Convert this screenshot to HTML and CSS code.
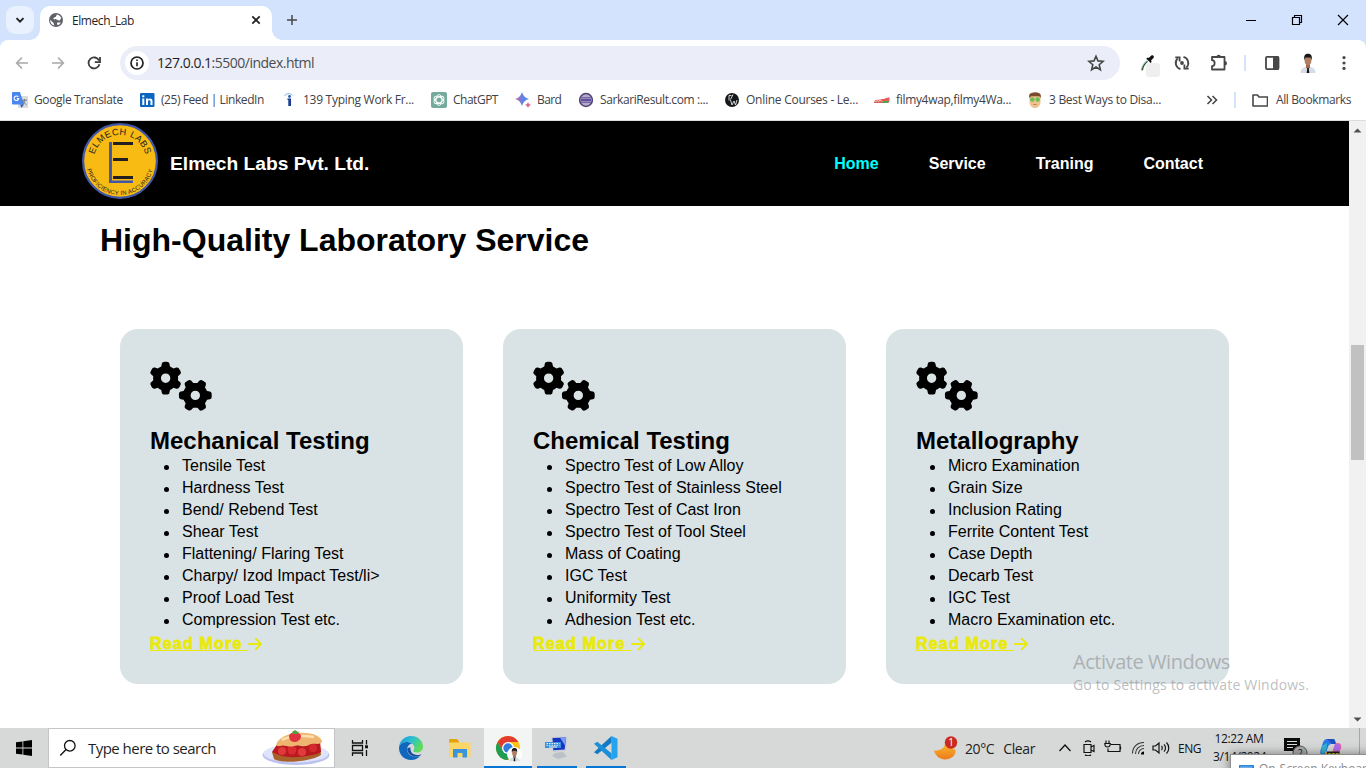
FILE: index.html
```html
<!DOCTYPE html>
<html lang="en">
<head>
<meta charset="utf-8">
<title>Elmech_Lab</title>
<link rel="stylesheet" href="styles.css">
</head>
<body>
<svg class="defs" aria-hidden="true">
  <defs>
    <path id="gear" d="M308.5 135.3c7.1-6.3 9.9-16.2 6.2-25c-2.3-5.3-4.8-10.5-7.6-15.5L304 89.4c-3-5-6.3-9.9-9.8-14.6c-5.7-7.6-15.7-10.1-24.7-7.1l-28.2 9.3c-10.7-8.8-23-16-36.2-20.9L199 27.1c-1.9-9.3-9.1-16.7-18.5-17.8C173.9 8.4 167.2 8 160.4 8h-.7c-6.8 0-13.5 .4-20.1 1.2c-9.4 1.1-16.6 8.6-18.5 17.8L115 56.1c-13.3 5-25.5 12.1-36.2 20.9L50.5 67.8c-9-3-19-.5-24.7 7.1c-3.5 4.7-6.8 9.6-9.9 14.6l-3 5.3c-2.8 5-5.3 10.2-7.6 15.6c-3.7 8.7-.9 18.6 6.2 25l22.2 19.8C32.6 161.9 32 168.9 32 176s.6 14.1 1.7 20.9L11.5 216.7c-7.1 6.3-9.9 16.2-6.2 25c2.3 5.3 4.8 10.5 7.6 15.6l3 5.2c3 5.1 6.3 9.9 9.9 14.6c5.7 7.6 15.7 10.1 24.7 7.1l28.2-9.3c10.7 8.8 23 16 36.2 20.9l6.1 29.1c1.9 9.3 9.1 16.7 18.5 17.8c6.7 .8 13.5 1.2 20.4 1.2s13.7-.4 20.4-1.2c9.4-1.1 16.6-8.6 18.5-17.8l6.1-29.1c13.3-5 25.5-12.1 36.2-20.9l28.2 9.3c9 3 19 .5 24.7-7.1c3.5-4.7 6.8-9.5 9.8-14.6l3.1-5.4c2.8-5 5.3-10.2 7.6-15.5c3.7-8.7 .9-18.6-6.2-25l-22.2-19.8c1.1-6.8 1.7-13.8 1.7-20.9s-.6-14.1-1.7-20.9l22.2-19.8zM112 176a48 48 0 1 1 96 0a48 48 0 1 1 -96 0z"/>
    <symbol id="cogs" viewBox="0 0 640 512">
      <use href="#gear"/>
      <use href="#gear" transform="translate(464 352) rotate(90) translate(-160 -176)"/>
    </symbol>
    <symbol id="arrow" viewBox="0 0 14 14"><path d="M1 7h12M7.700 1.700 13 7l-5.300 5.300" fill="none" stroke="#e9e90b" stroke-width="1.900" stroke-linecap="round" stroke-linejoin="round"/></symbol>
    <symbol id="person" viewBox="0 0 20 20">
      <path d="M2.500 20c0-4 2.500-5.500 5.500-6h4c3 .5 5.500 2 5.500 6z" fill="#d5dde6"/>
      <path d="M8 11h4v3.500l-2 2-2-2z" fill="#a06a50"/><path d="M9.300 15h1.400l.6 5H8.700z" fill="#15161c"/>
      <ellipse cx="10" cy="7.500" rx="3.400" ry="5" fill="#b07e62"/>
      <path d="M6.300 7.500C5.500 2 7.500.8 10 .8s4.500 1.200 3.700 6.700c-.5-1.500-.8-2.500-1.400-2.900H7.700c-.6.400-.9 1.400-1.400 2.900z" fill="#17161a"/>
    </symbol>
  </defs>
</svg>

<header class="tabstrip">
  <button class="tab-search"><svg width="12" height="12" viewBox="0 0 12 12"><path d="M2.500 4.200 6 7.700l3.500-3.500" fill="none" stroke="#1f1f1f" stroke-width="1.900"/></svg></button>
  <div class="tab">
    <svg width="14" height="14" viewBox="0 0 14 14"><circle cx="7" cy="7" r="7" fill="#5f6368"/><path d="M1.200 6.800 4.500 10c.6.6.3 1.600.8 2.600C2.500 12 1 9.500 1.200 6.800zM8 1.400c2 .3 3.500 1.800 4.200 3.700L11 7c-.5 1-2 .3-2.800-.3-.9-.6-2.700 0-3.700-.8-.5-.9 1-1.600 2-1.900.8-.3.600-1.700 1.500-2.600zM8.500 9.500h3.200c-.6 1.300-1.600 2.200-2.900 2.700-.8-.8-1-2-.3-2.700z" fill="#fff"/></svg>
    <span class="tab-title">Elmech_Lab</span>
    <svg class="tab-close" width="10" height="10" viewBox="0 0 10 10"><path d="m1.300 1.300 7.400 7.400m0-7.400L1.300 8.700" stroke="#1f1f1f" stroke-width="1.700"/></svg>
  </div>
  <svg class="new-tab" width="12" height="12" viewBox="0 0 12 12"><path d="M6 1v10M1 6h10" stroke="#474747" stroke-width="1.500"/></svg>
  <div class="window-controls">
    <svg width="12" height="12" viewBox="0 0 12 12"><path d="M1 6.500h10" stroke="#000"/></svg>
    <svg width="12" height="12" viewBox="0 0 12 12"><path d="M1.500 3.500h7v7h-7zM3.500 3V1.500h7v7H9" fill="none" stroke="#000" stroke-width="1.200"/></svg>
    <svg width="12" height="12" viewBox="0 0 12 12"><path d="m1 1 10 10M11 1 1 11" stroke="#000" stroke-width="1.200"/></svg>
  </div>
</header>

<div class="toolbar-wrap"><div class="toolbar">
  <svg class="ic" viewBox="0 0 20 20"><path d="M16 10H5M10 4.500 4.700 10 10 15.500" fill="none" stroke="#a9a9a9" stroke-width="1.700"/></svg>
  <svg class="ic" viewBox="0 0 20 20"><path d="M4 10h11M10 4.500 15.300 10 10 15.500" fill="none" stroke="#a9a9a9" stroke-width="1.700"/></svg>
  <svg class="ic" viewBox="0 0 20 20"><path d="M15 7.500A5.500 5.500 0 1 0 15.400 11.200" fill="none" stroke="#3c3c3c" stroke-width="1.800"/><path d="M16 4v5.200h-5.200" fill="none" stroke="#3c3c3c" stroke-width="1.800"/></svg>
  <div class="omnibox">
    <span class="site-info"><svg width="14" height="14" viewBox="0 0 14 14"><circle cx="7" cy="7" r="6" fill="none" stroke="#1f1f1f" stroke-width="1.700"/><path d="M7 6.300v4M7 3.500v1.600" stroke="#1f1f1f" stroke-width="1.600"/></svg></span>
    <span class="url"><b>127.0.0.1</b>:5500/index.html</span>
    <svg class="star" width="18" height="18" viewBox="0 0 18 18"><path d="m9 2.200 2 4.700 5.100.4-3.900 3.400 1.200 5L9 13l-4.400 2.700 1.200-5L1.900 7.300 7 6.900z" fill="none" stroke="#474747" stroke-width="1.600"/></svg>
  </div>
  <svg class="ic" viewBox="0 0 20 20"><rect x="8" y="10" width="14" height="14" rx="3" fill="#efefef"/><path d="M4 17.500c0-3 2-6.500 5.500-9.500" fill="none" stroke="#8fb39b" stroke-width="2.200"/><path d="M4.300 17c.8-3.500 2.500-6.500 5-8.500" stroke="#24452f" stroke-width="1" fill="none"/><path d="m8.300 5.800 4.400 4.200 1-1.200-.7-1.200 2-2c1.300-1.400 1-2.300.3-2.900-.8-.7-2-.5-3 .7L10.700 5l-1.300-.4z" fill="#111"/></svg>
  <svg class="ic" viewBox="0 0 20 20"><g fill="none" stroke="#474747" stroke-width="1.800"><path d="M11.500 3.900A6.300 6.300 0 0 1 14.300 14.600M8.500 16.100A6.300 6.300 0 0 1 5.700 5.400"/><path d="M3.300 4.300h4.300v4.300M16.700 15.700h-4.300v-4.300"/></g><circle cx="10" cy="10" r="1.900" fill="#474747"/></svg>
  <svg class="ic shift" viewBox="0 0 20 20"><path d="M3 4h12.500v12.500H3v-3.300c3.500-.3 3.500-5.700 0-6z" fill="none" stroke="#474747" stroke-width="1.800" stroke-linejoin="round"/><path d="M7.500 4a2.200 2.200 0 0 1 4.400 0zM15.800 8a2.200 2.200 0 0 1 0 4.400z" fill="#474747"/></svg>
  <i class="sep shift"></i>
  <svg class="ic shift" viewBox="0 0 20 20"><rect x="4" y="3.900" width="12.500" height="12.200" rx="1" fill="none" stroke="#474747" stroke-width="1.800"/><path d="M11 3.500h6v13h-6z" fill="#474747"/></svg>
  <svg class="ic"><use href="#person"/></svg>
  <svg class="ic" viewBox="0 0 20 20"><g fill="#474747"><circle cx="10" cy="4.600" r="1.600"/><circle cx="10" cy="10" r="1.600"/><circle cx="10" cy="15.400" r="1.600"/></g></svg>
</div></div>

<div class="bookmarks">
  <a><svg viewBox="0 0 16 16"><rect x="6" y="4" width="10" height="12" rx="1" fill="#d8dade"/><path d="M1 0h7l4 12.500H1a1 1 0 0 1-1-1V1a1 1 0 0 1 1-1z" fill="#4a86ee"/><path d="m8 12.500 4 0-2.500 3.300z" fill="#2b5fc4"/><path d="M6.300 4.900A2.300 2.300 0 1 0 6.700 6.600H4.800" fill="none" stroke="#fff" stroke-width="1.100"/><path d="M10 8.200h5M12.600 7v1.200c0 2-1 3.600-2.300 4.300M11 8.500c.5 1.800 1.700 3.200 3.500 4" fill="none" stroke="#6f7c8b"/></svg><span class="w35">Google Translate</span></a>
  <a><svg viewBox="0 0 16 16"><rect x="1" y="1" width="14.500" height="14" rx="1" fill="#0a66c2"/><path d="M3.300 6.500h2V13h-2zM3.300 3.300h2v2h-2zM7 6.500h2v.9c1-1.500 4.500-1.400 4.500 1.600v4h-2V9.500c0-1.600-2.500-1.600-2.500 0V13H7z" fill="#fff"/></svg><span class="w43">(25) Feed | LinkedIn</span></a>
  <a><svg viewBox="0 0 16 16"><path d="M6.500 6.500H10V14H7.300V8h-.8z" fill="#173b8f"/><circle cx="8.500" cy="4.500" r="1.400" fill="#2d5bb5"/><path d="M3.500 4c1-2.500 6-3.500 8-.5" stroke="#8db4dd" fill="none"/></svg><span class="w28">139 Typing Work Fr...</span></a>
  <a><svg viewBox="0 0 16 16"><rect width="16" height="16" rx="2" fill="#74aa9c"/><g fill="none" stroke="#fff" stroke-width=".9"><ellipse cx="8" cy="8" rx="2.900" ry="5.400"/><ellipse cx="8" cy="8" rx="2.900" ry="5.400" transform="rotate(60 8 8)"/><ellipse cx="8" cy="8" rx="2.900" ry="5.400" transform="rotate(120 8 8)"/></g></svg><span class="w49">ChatGPT</span></a>
  <a><svg viewBox="0 0 16 16"><defs><linearGradient id="bard"><stop offset="0" stop-color="#dd6a86"/><stop offset=".45" stop-color="#6d7fe0"/><stop offset="1" stop-color="#3c8fee"/></linearGradient></defs><path d="M7 0c1.200 3.800 3 5.800 7 7-4 1.200-5.800 3.200-7 7-1.200-3.800-3-5.800-7-7 4-1.200 5.800-3.200 7-7z" fill="url(#bard)"/><path d="M13 10c.5 1.700 1.300 2.500 3 3-1.700.5-2.500 1.300-3 3-.5-1.700-1.300-2.500-3-3 1.700-.5 2.500-1.300 3-3z" fill="#dc6780"/></svg><span class="w60">Bard</span></a>
  <a><svg viewBox="0 0 16 16"><circle cx="8" cy="8" r="6.400" fill="#b8a8d0" stroke="#4d4370" stroke-width="1.500"/><path d="M3 5.800h10M3 10.200h10" stroke="#4d4585" stroke-width=".9"/><path d="M3 7h10v2H3z" fill="#5f4fa0"/></svg><span class="w39">SarkariResult.com :...</span></a>
  <a><svg viewBox="0 0 16 16"><circle cx="8" cy="8" r="7" fill="#15181b"/><path d="M5 3.500v5M5 3.500h2.500M9 2.500l-2.500 5M6.500 8l1.500 5L10 9l1.500 4L13 8" fill="none" stroke="#e8e8e8" stroke-width=".9"/></svg><span class="w26">Online Courses - Le...</span></a>
  <a><svg viewBox="0 0 16 16"><path d="M0 10.500c1-4 4-2 6-3s3 0 5-1 3-1 4.500-1v3l-1 2.500H0z" fill="#e55b56"/><path d="M8.500 9h6.500l-1 2H8.500z" fill="#4aa850"/><path d="m1.500 9.500 2-1 1 1 2-1.500 1.500 1.500" stroke="#fff" stroke-width=".8" fill="none"/></svg><span class="w32">filmy4wap,filmy4Wa...</span></a>
  <a><svg viewBox="0 0 16 16"><path d="M2.500 4h11v6c0 3.500-2.500 6-5.500 6s-5.500-2.500-5.500-6z" fill="#eec391"/><path d="M2.200 6V3c1-3.500 10.600-4 11.600 0v3l-1.500-1.800h-8z" fill="#7a4a2b"/><circle cx="5.300" cy="7.500" r="2.300" fill="#6cbf55"/><circle cx="10.700" cy="7.500" r="2.300" fill="#6cbf55"/><path d="M6 12.500h4" stroke="#c58a62"/></svg><span class="w29">3 Best Ways to Disa...</span></a>
  <svg class="more" viewBox="0 0 12 12"><path d="m1.500 2 4 4-4 4M6.500 2l4 4-4 4" fill="none" stroke="#474747" stroke-width="1.600"/></svg>
  <i class="sep"></i>
  <a class="all"><svg viewBox="0 0 16 16"><path d="M1 3h4.500l1.500 2h8.500v9H1z" fill="none" stroke="#474747" stroke-width="1.600" stroke-linejoin="round"/></svg><span class="w38">All Bookmarks</span></a>
</div>

<div class="viewport">
  <main class="page">
    <nav class="nav">
      <svg class="logo" viewBox="0 0 76 76">
        <defs><path id="arcTop" d="M12.400 31.500A26.500 26.500 0 0 1 63.600 31.500"/><path id="arcBottom" d="M5 46.200A34 34 0 0 0 71 46.200"/></defs>
        <circle cx="38" cy="38" r="36.900" fill="#f7bb14" stroke="#4257a5" stroke-width="2.200"/>
        <text class="logo-name"><textPath href="#arcTop" textLength="69">ELMECH LABS</textPath></text>
        <text class="logo-motto"><textPath href="#arcBottom" textLength="89">PROFICIENCY IN ACCURACY</textPath></text>
        <path d="M27 19h3v38.500h21V60H27z" fill="#4257a5"/>
        <path d="M31 19h20v3H31zM31 35h15v3H31zM31 53h20v3H31z" fill="#231f20"/>
      </svg>
      <span class="brand">Elmech Labs Pvt. Ltd.</span>
      <ul class="menu"><li class="active">Home</li><li>Service</li><li>Traning</li><li>Contact</li></ul>
    </nav>
    <h1>High-Quality Laboratory Service</h1>
    <section class="cards">
      <article class="card">
        <svg class="cogs"><use href="#cogs"/></svg>
        <h2>Mechanical Testing</h2>
        <ul><li>Tensile Test</li><li>Hardness Test</li><li>Bend/ Rebend Test</li><li>Shear Test</li><li>Flattening/ Flaring Test</li><li>Charpy/ Izod Impact Test/li&gt;</li><li>Proof Load Test</li><li>Compression Test etc.</li></ul>
        <a class="read"><span>Read More </span><svg><use href="#arrow"/></svg></a>
      </article>
      <article class="card">
        <svg class="cogs"><use href="#cogs"/></svg>
        <h2>Chemical Testing</h2>
        <ul><li>Spectro Test of Low Alloy</li><li>Spectro Test of Stainless Steel</li><li>Spectro Test of Cast Iron</li><li>Spectro Test of Tool Steel</li><li>Mass of Coating</li><li>IGC Test</li><li>Uniformity Test</li><li>Adhesion Test etc.</li></ul>
        <a class="read"><span>Read More </span><svg><use href="#arrow"/></svg></a>
      </article>
      <article class="card">
        <svg class="cogs"><use href="#cogs"/></svg>
        <h2>Metallography</h2>
        <ul><li>Micro Examination</li><li>Grain Size</li><li>Inclusion Rating</li><li>Ferrite Content Test</li><li>Case Depth</li><li>Decarb Test</li><li>IGC Test</li><li>Macro Examination etc.</li></ul>
        <a class="read"><span>Read More </span><svg><use href="#arrow"/></svg></a>
      </article>
    </section>
  </main>
  <div class="scrollbar">
    <svg width="9" height="5" viewBox="0 0 9 5"><path d="M.5 4.500h8l-4-4z" fill="#505050"/></svg>
    <i class="thumb"></i>
    <svg class="down" width="9" height="5" viewBox="0 0 9 5"><path d="M.5.5h8l-4 4z" fill="#505050"/></svg>
  </div>
</div>

<div class="watermark"><p class="wm-title">Activate Windows</p><p class="wm-sub">Go to Settings to activate Windows.</p></div>

<footer class="taskbar">
  <svg class="start" viewBox="0 0 16 16"><path d="M0 2.300 6.500 1.400v6.200H0zM7.300 1.300 16 0v7.600H7.300zM0 8.400h6.500v6.200L0 13.700zM7.300 8.400H16V16l-8.700-1.300z"/></svg>
  <div class="search">
    <svg width="18" height="18" viewBox="0 0 18 18"><circle cx="10.800" cy="6.800" r="5.300" fill="none" stroke="#111" stroke-width="1.300"/><path d="M7 10.600 1.300 16.500" stroke="#111" stroke-width="1.400"/></svg>
    <span>Type here to search</span>
    <svg class="pie" viewBox="0 0 68 36">
      <ellipse cx="34" cy="25" rx="33.500" ry="10" fill="#bcc3ee"/><ellipse cx="34" cy="23.500" rx="32.500" ry="9" fill="#dfe3fb"/>
      <path d="M10 22 12 29c8 5 36 3 47-4l-1-10z" fill="#a9612a"/>
      <path d="M16 13c14 3 28 1 42-2l1 11c-9 5-33 7-42 3l-7-3z" fill="#b9191f"/>
      <circle cx="20" cy="21" r="4" fill="#e0393c"/><circle cx="30" cy="20" r="4.500" fill="#d92c30"/><circle cx="40" cy="22" r="4" fill="#e33a3c"/><circle cx="51" cy="18" r="4" fill="#d22a2f"/>
      <path d="M17 10C22 5 32 2 43 3c9 0 17 4 17 9-3 4-8 0-13 3-6 3-10-1-15 1-6 2-9-2-14 0-5 1-4-3-1-6z" fill="#edb56f"/><path d="M20 10C27 6 40 5 52 7" fill="none" stroke="#fbdfae" stroke-width="2.500"/>
      <path d="M27 6c1-5 12-4 12 0 0 4-4 6-7 6s-5-3-5-6z" fill="#df3440"/><path d="m30 2 3-2 3 2 2-1-3 3-4 0z" fill="#54a03a"/>
    </svg>
  </div>
  <svg class="taskview" viewBox="0 0 18 18"><path d="M1.500 1v3h10V1M1.500 17v-3h10v3M1.500 6.500h10v5h-10z" fill="none" stroke="#111" stroke-width="1.300"/><path d="M15.500 1v4.500M15.500 11v6" stroke="#111" stroke-width="1.300"/><path d="M14 6.300h3v3h-3z" fill="#111"/></svg>
  <div class="apps">
    <div class="app"><svg viewBox="0 0 24 24"><defs><linearGradient id="edge" x1="0" y1="0" x2="1" y2=".5"><stop offset="0" stop-color="#1a93dc"/><stop offset=".5" stop-color="#2bbfd2"/><stop offset="1" stop-color="#5fdc58"/></linearGradient></defs><path d="M0 12C0 5 5.500 0 12 0c7 0 12 5 12 10.500 0 4-3 6-6 6-2.700 0-4-1-3.600-2 .6-1 1-1.500 1-3C15.400 8 11 6 7.500 6 3.500 6 0 9 0 12z" fill="url(#edge)"/><path d="M0 12c0-3 3.500-6 7.500-6 2 0 4 .6 5.500 1.700C9 8 7.500 12 8.500 15.500c1.200 4 6 6.500 12.500 4.500-2 2.500-5 4-9 4C5 24 0 18.500 0 12z" fill="#1167bd"/><path d="M8.200 13.500c.7 4 4 7.500 9.800 7.100 1.500-.2 3-.8 4-1.500.5-.3.3-.9-.3-.7-7 2-11-2-10.200-6.900-1.800-.4-3.300.4-3.300 2z" fill="#164f9d"/></svg></div>
    <div class="app"><svg viewBox="0 0 24 24"><path d="M1 4.500C1 3.700 1.500 3 2.300 3H9l2 2.500v3H1z" fill="#e2a30c"/><path d="M1 6.500h20.500c.8 0 1 .5 1 1V20c0 .6-.3 1-1 1H2c-.7 0-1-.5-1-1z" fill="#fdd466"/><path d="M5 13h14v8.500h-4.500V17h-5v4.500H5z" fill="#3a94dc"/></svg></div>
    <div class="app open current"><svg viewBox="0 0 24 24"><circle cx="12" cy="12" r="12" fill="#fbc116"/><path d="M1.600 6A12 12 0 0 1 22.400 6H12L7 15z" fill="#e33b2e"/><path d="M1.600 6A12 12 0 0 0 12 24l5-9H7z" fill="#1f9d55"/><circle cx="12" cy="12" r="6" fill="#fff"/><circle cx="12" cy="12" r="4.700" fill="#2f7de1"/><circle cx="18.500" cy="18.500" r="7.500" fill="#fff"/><use href="#person" x="11.500" y="11.500" width="14" height="14"/></svg></div>
    <div class="app open"><svg viewBox="0 0 24 24"><path d="m6 1 16.500-.5L21 15l-13 1z" fill="#c9ced8"/><path d="m7.500 2 13.500-.5-1.300 12-11.400.8z" fill="#1735c4"/><path d="m15 1.800 6-.3-1 8z" fill="#7d9cf3"/><path d="m10 17 8-1 4 4.500-9 2.500-6-3z" fill="#bcc0c8"/><path d="M0 6h16v6H0z" fill="#3c8edb"/><path d="M1.500 7.500h13M1.500 9.300h13" stroke="#e8f2fc" stroke-dasharray="1.500 1"/><path d="M4 11h8" stroke="#e8f2fc"/></svg></div>
    <div class="app open"><svg viewBox="0 0 24 24"><path d="m17.500 0 6 2.700v18.600l-6 2.700z" fill="#25a4ee"/><path d="M17.500 0v6.800L3.300 18.300 0 16.300z" fill="#1479c4"/><path d="M17.500 24v-6.800L3.300 5.700 0 7.700z" fill="#1c8fd9"/></svg></div>
  </div>
  <div class="weather">
    <svg viewBox="0 0 24 24"><defs><linearGradient id="moon" x1="0" y1="0" x2="0" y2="1"><stop offset="0" stop-color="#f9b72b"/><stop offset="1" stop-color="#ec7a1c"/></linearGradient></defs><path d="M0 14.500c6 .5 10-2 11-6.500l10.500 6c1 5-4.500 9.500-10.500 9.500-5 0-10-4-11-9z" fill="url(#moon)"/><circle cx="17" cy="6.500" r="6.200" fill="#c92c1f"/><text x="14.200" y="10.200" class="badge">1</text></svg>
    <span>20°C</span><span>Clear</span>
  </div>
  <div class="tray">
    <svg viewBox="0 0 14 14"><path d="m1.500 10 5.500-6 5.500 6" fill="none" stroke="#111" stroke-width="1.300"/></svg>
    <svg viewBox="0 0 14 16"><path d="M2 4.500h7v8H2zM9 7l3-1.500v6L9 10M3 2c2-1.500 4-1.500 6 0M3 14.800c2 1.400 4 1.400 6 0" fill="none" stroke="#111" stroke-width="1.200"/></svg>
    <svg viewBox="0 0 18 16"><path d="M7 4.500h9v7H4v-3M16.500 6.500v3M2 .5v3M5 .5v3M.8 3.500h5.500c0 3-1 3.500-2.800 3.500S.8 6.500.8 3.500z" fill="none" stroke="#111" stroke-width="1.200"/></svg>
    <svg viewBox="0 0 14 14"><path d="M1.500 12.500C1.500 6 6 1.500 13 1.500M4.500 13C4.500 8 8 4.500 13 4.500M7.500 13C7.500 10 10 7.500 13 7.500" fill="none" stroke="#333" stroke-width="1.100"/><path d="M10 13.500c0-2 1-3 3-3v3z"/></svg>
    <svg viewBox="0 0 18 14"><path d="M1 5h2.500L7 2v10L3.500 9H1zM9.500 5c1 1 1 3 0 4M12 3.300c2 2 2 5.400 0 7.400M14.500 1.500c3 3 3 8 0 11" fill="none" stroke="#111" stroke-width="1.200"/></svg>
  </div>
  <span class="lang">ENG</span>
  <div class="clock"><span>12:22 AM</span><span>3/14/2024</span></div>
  <svg class="notif" viewBox="0 0 24 24"><path d="M0 0h16v13h-3.500v4l-4-4H0z" fill="#0b0b0b"/><path d="M3 3.500h10M3 6.500h10M3 9.500h6" stroke="#ddd" stroke-width="1.200"/><circle cx="16" cy="15" r="7" fill="#aeaeae" stroke="#555"/><text x="13.200" y="18.500" class="count">2</text></svg>
  <svg class="copilot" viewBox="0 0 22 22"><path d="M7 1h6c2 0 2 2 3 5h-5c-2 0-3 2-4 6s-2 5-4 5c-4 0-3-4-1-9 1-4 2-7 5-7z" fill="#2679e8"/><path d="M7 1h6c2 0 2 2 3 5h-4L9 3z" fill="#1c4fc0"/><path d="M14 20H8c-2 0-2-2-3-5h5c2 0 3-2 4-6s2-4 4-4c4 0 4 4 2 8-1 4-3 7-6 7z" fill="#ef6aa0"/><path d="M15 6c3-1 6 0 5.500 3L19 14l-6-2z" fill="#b56bea"/><path d="M5 14h7l-1 6H8c-2 0-2-3-3-6z" fill="#f5a33a"/><path d="M2 8l5-3-1 9-4 2c-1-2-1-5 0-8z" fill="#37b5d0"/><path d="M7 13.500h12.500V20H7z" fill="#1d1d1d"/><text x="7.800" y="19" class="pre">PRE</text></svg>
  <i class="show-desktop"></i>
</footer>

<div class="popup"><svg width="15" height="10" viewBox="0 0 15 10"><path d="M0 0h15v10H0z" fill="#2f86d8"/><path d="M1.500 2.200h12M1.500 4.500h12" stroke="#dcebfa" stroke-dasharray="1.200 .8"/></svg><span>On-Screen Keyboard</span></div>
</body>
</html>
```
FILE: styles.css
```css
* { box-sizing: border-box; }
body { margin: 0; width: 1366px; height: 768px; overflow: hidden; position: relative; display: flex; flex-direction: column; background: #fff; font-family: "Open Sans", sans-serif; font-size: 12px; color: #1f1f1f; }
svg { display: block; flex: none; }
ul, h1, h2, p { margin: 0; padding: 0; }
.defs { position: absolute; width: 0; height: 0; }

.tabstrip { height: 40px; flex: none; background: #d3e3fd; display: flex; align-items: center; padding-left: 6px; }
.tab-search { width: 28px; height: 28px; border: 0; border-radius: 9px; background: #e9f1fe; padding: 0; display: flex; align-items: center; justify-content: center; margin-right: 6px; }
.tab { position: relative; align-self: flex-end; width: 232px; height: 34px; border-radius: 10px 10px 0 0; background: #fff; display: flex; align-items: center; padding: 0 11px 6px 9px; }
.tab::before, .tab::after { content: ""; position: absolute; bottom: 0; width: 10px; height: 10px; }
.tab::before { left: -10px; background: radial-gradient(circle at 0 0, transparent 9.5px, #fff 10px); }
.tab::after { right: -10px; background: radial-gradient(circle at 100% 0, transparent 9.5px, #fff 10px); }
.tab-title { margin-left: 9px; letter-spacing: -.42px; }
.tab-close { margin-left: auto; }
.new-tab { margin-left: 14px; }
.window-controls { margin-left: auto; display: flex; gap: 34px; padding-right: 17px; }

.toolbar-wrap { flex: none; background: #d3e3fd; }
.toolbar { height: 46px; display: grid; grid-template-columns: 36px 36px 36px 1018px 34px 36px 35px 18px 37px 36px 20px; align-items: center; padding-left: 12px; background: #fff; border-radius: 8px 8px 0 0; }
.ic { width: 20px; height: 20px; overflow: visible; }
.shift { margin-left: 1px; }
.omnibox { width: 1000px; height: 34px; border-radius: 17px; background: #ebeef8; display: flex; align-items: center; padding: 0 15px 0 5px; }
.site-info { width: 24px; height: 24px; border-radius: 50%; background: #fff; display: flex; align-items: center; justify-content: center; }
.url { margin: -1px 0 0 8px; font-size: 14px; letter-spacing: -.5px; color: #4a4d52; }
.url b { font-weight: 400; color: #1f1f1f; }
.star { margin-left: auto; }
.sep { width: 2px; height: 16px; background: #d3e3fd; }

.bookmarks { height: 35px; flex: none; border-bottom: 1px solid #dcdcdc; display: grid; grid-template-columns: 127px 142px 150px 84px 63px 146px 150px 153px 179px 28px 18px auto; align-items: center; padding: 0 0 6px 12px; color: #3f4246; }
.bookmarks a { display: flex; align-items: center; gap: 6px; white-space: nowrap; }
.bookmarks a svg { width: 16px; height: 16px; }
.bookmarks a span { margin-top: -1px; }
.bookmarks .all { gap: 8px; }
.more { width: 12px; height: 12px; }
.w26 { letter-spacing: -.26px; } .w28 { letter-spacing: -.28px; } .w29 { letter-spacing: -.29px; }
.w32 { letter-spacing: -.32px; } .w35 { letter-spacing: -.35px; } .w38 { letter-spacing: -.38px; }
.w39 { letter-spacing: -.39px; } .w43 { letter-spacing: -.43px; } .w49 { letter-spacing: -.49px; } .w60 { letter-spacing: -.6px; }

.viewport { height: 607px; flex: none; display: flex; }
.page { width: 1349px; background: #fff; color: #000; font-family: "Liberation Sans", Arial, sans-serif; font-size: 16px; }
.nav { height: 85px; background: #000; color: #fff; display: flex; align-items: center; padding: 0 146px 0 82px; font-weight: 700; }
.logo { width: 76px; height: 76px; margin-top: -5px; }
.logo-name { font-size: 9.200px; font-weight: 400; fill: #231f20; }
.logo-motto { font-size: 6px; font-weight: 400; fill: #231f20; }
.brand { margin-left: 12px; font-size: 19.2px; }
.menu { margin-left: auto; display: flex; gap: 50px; list-style: none; }
.menu .active { color: #0ff; }
h1 { margin: 16px 0 0 100px; font-size: 32px; line-height: 36px; }
.cards { display: flex; gap: 40px; padding: 71px 0 0 120px; }
.card { width: 343px; height: 355px; border-radius: 18px; background: #d9e2e4; padding: 32px 30px 0; }
.cogs { width: 62.500px; height: 50px; }
h2 { margin-top: 16px; font-size: 24px; line-height: 27px; }
.card ul { padding: 1px 0 0 14px; list-style: none; }
.card li { display: flex; align-items: center; line-height: 22px; }
.card li::before { content: ""; width: 5px; height: 5px; margin: 2px 13px 0 0; border-radius: 50%; background: #000; }
.read { display: flex; align-items: center; height: 26px; color: #e9e90b; font-weight: 700; font-size: 16px; }
.read span { white-space: pre; letter-spacing: 1.200px; -webkit-text-stroke: .8px #e9e90b; text-decoration: underline; text-decoration-thickness: 1px; }
.read svg { width: 14px; height: 14px; }

.scrollbar { width: 17px; background: #f1f1f1; display: flex; flex-direction: column; align-items: center; padding: 7px 0 6px; }
.thumb { width: 13px; height: 115px; background: #c1c1c1; margin-top: 212px; }
.down { margin-top: auto; }

.watermark { position: absolute; left: 1073px; top: 648px; color: rgba(125,128,130,.52); white-space: nowrap; }
.wm-title { font-size: 20px; line-height: 27px; letter-spacing: -.45px; }
.wm-sub { font-size: 14px; line-height: 20px; letter-spacing: .19px; }

.taskbar { height: 40px; flex: none; background: #d7d9d9; display: flex; align-items: center; }
.start { width: 16px; height: 16px; margin: 0 16px 0 16px; }
.search { width: 287px; height: 40px; background: #fff; border: 1px solid #c4c6c6; display: flex; align-items: center; padding-left: 10px; font-size: 15px; letter-spacing: -.53px; }
.search span { margin-left: 11px; }
.pie { width: 68px; height: 36px; margin-left: auto; margin-right: 4px; }
.taskview { width: 18px; height: 18px; margin-left: 16px; }
.apps { display: flex; margin-left: 17px; align-self: stretch; }
.app { width: 49px; display: flex; align-items: center; justify-content: center; padding-top: 2px; border-bottom: 2px solid transparent; background-clip: padding-box; }
.app svg { width: 24px; height: 24px; overflow: visible; }
.open { width: 40px; margin: 0 5px 0 4px; border-bottom-color: #0a76d4; }
.current { width: 48px; margin: 0 1px 0 0; background-color: #f3f4f4; }
.weather { display: flex; align-items: center; margin-left: 303px; font-size: 14px; letter-spacing: -.4px; color: #222; }
.weather svg { width: 24px; height: 24px; margin-right: 7px; }
.weather span + span { margin-left: 9px; }
.badge { font: 10px "Open Sans", sans-serif; fill: #fff; }
.tray { display: flex; align-items: center; margin-left: 23px; gap: 10px; }
.tray svg { height: 14px; width: 14px; }
.tray svg:nth-child(2) { height: 16px; }
.tray svg:nth-child(3) { width: 18px; height: 16px; margin-left: -2px; }
.tray svg:nth-child(4) { margin-left: -1px; }
.tray svg:nth-child(5) { width: 18px; margin-left: -3px; }
.lang { margin-left: 8px; letter-spacing: -.48px; color: #111; }
.clock { display: flex; flex-direction: column; width: 52px; margin-left: 12px; line-height: 18px; letter-spacing: -.39px; color: #111; text-align: center; align-self: flex-start; margin-top: 2px; }
.notif { width: 24px; height: 24px; margin: 4px 0 0 19px; }
.count { font: 10px "Open Sans", sans-serif; fill: #222; }
.copilot { width: 22px; height: 22px; margin: 2px 0 0 12px; }
.pre { font: bold 6px "Open Sans", sans-serif; fill: #e8c81e; }
.show-desktop { width: 1px; height: 40px; margin-left: 17px; background: #a5a7a7; }

.popup { position: absolute; left: 1230px; top: 754px; width: 150px; height: 40px; background: #fff; border: 1px solid #8d8d8d; box-shadow: 0 0 10px rgba(0,0,0,.45); display: flex; align-items: flex-start; padding: 9px 0 0 8px; white-space: nowrap; }
.popup svg { margin-top: 1px; }
.popup span { margin-left: 5px; margin-top: -3px; line-height: 16px; color: #8b8b8b; }
```
